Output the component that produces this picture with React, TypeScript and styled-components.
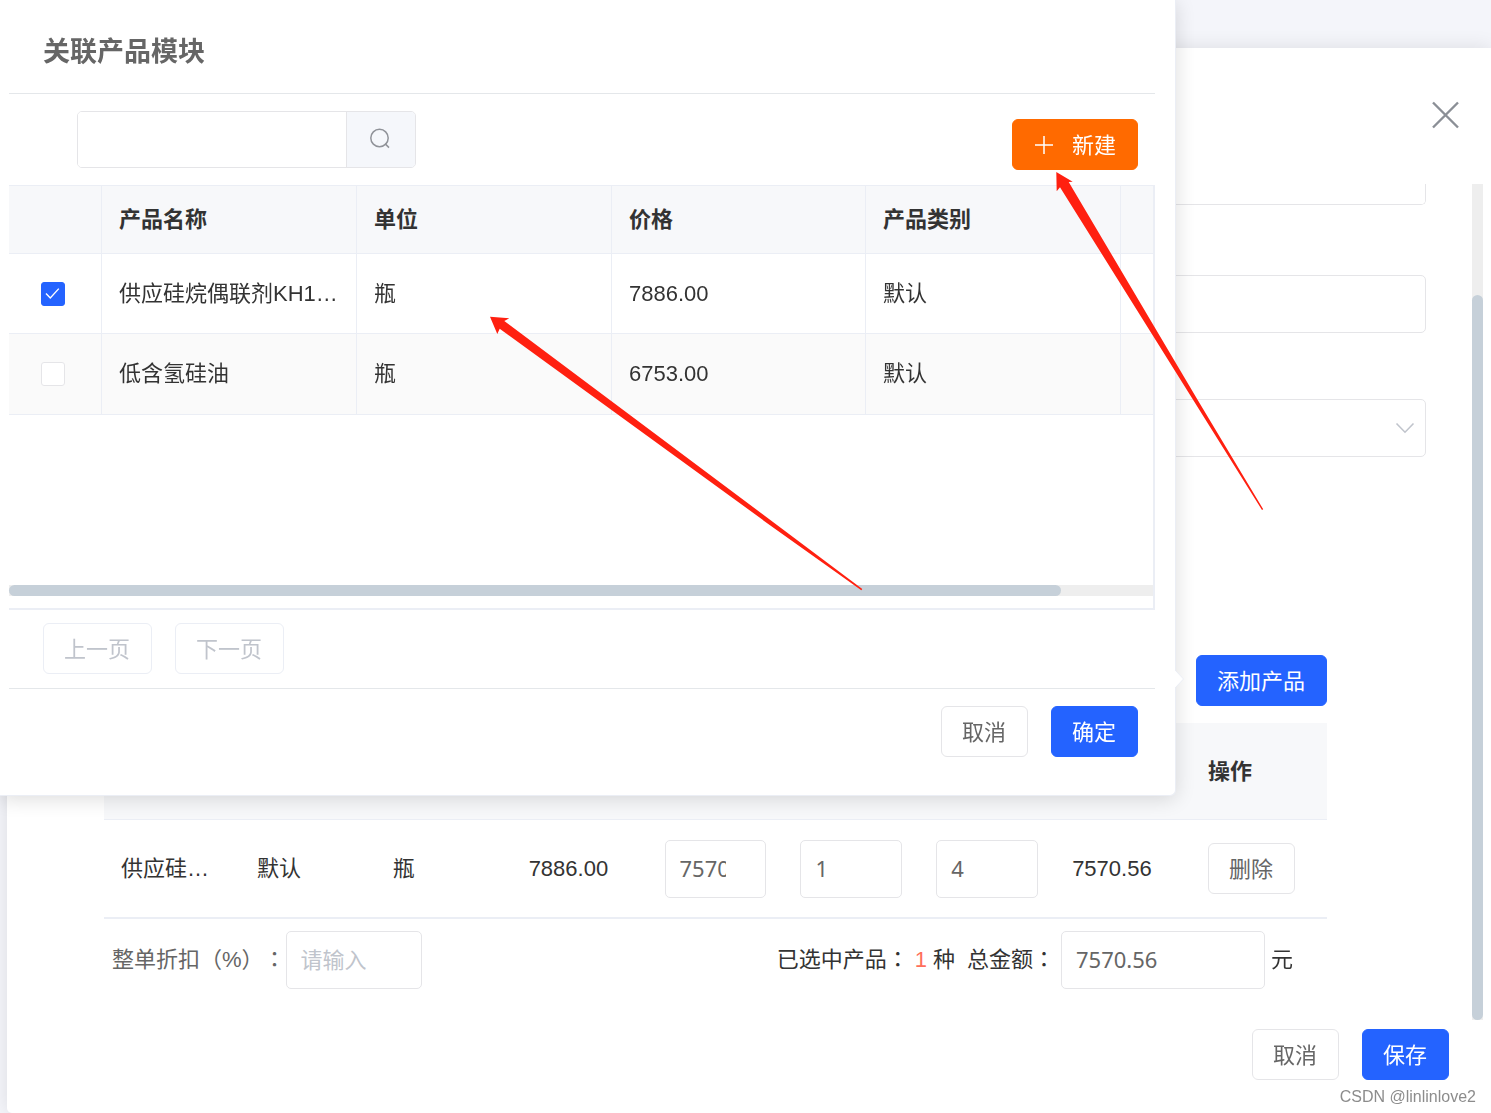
import React, { useState } from "react";
import styled, { createGlobalStyle, css } from "styled-components";

const color = {
  page: "#f4f5fa",
  text: "#333333",
  muted: "#666666",
  hint: "#c0c4cc",
  line: "#ebeef5",
  rule: "#e4e7ea",
  field: "#e5e5e8",
  head: "#f7f8fa",
  primary: "#2463ff",
  accent: "#ff6a00",
  thumb: "#c6d0d9",
  track: "#eeeeee",
};

const GlobalStyle = createGlobalStyle`
  *, *::before, *::after { box-sizing: border-box; }
  body {
    margin: 0;
    background: ${color.page};
    color: ${color.text};
    font: 22px/30px "Liberation Sans", "Noto Sans CJK SC", sans-serif;
    text-spacing-trim: space-all;
  }
  button, input, select, textarea { font: inherit; margin: 0; }
`;

const Page = styled.div`
  position: relative;
  display: flex;
  min-height: 100vh;
  padding: 48px 0 0 7px;
  overflow: hidden;
`;

/* ---------- shared controls ---------- */

const Button = styled.button<{ $kind?: "primary" | "accent" | "plain" }>`
  display: inline-flex;
  align-items: center;
  gap: 17px;
  height: 51px;
  padding: 2px 21px 0 20px;
  border: 1px solid ${color.field};
  border-radius: 6px;
  background: #fff;
  color: ${color.muted};
  white-space: nowrap;
  cursor: pointer;
  ${(p) =>
    p.$kind === "primary" &&
    css`
      border-color: ${color.primary};
      background: ${color.primary};
      color: #fff;
    `}
  ${(p) =>
    p.$kind === "accent" &&
    css`
      border-color: ${color.accent};
      background: ${color.accent};
      color: #fff;
    `}
  &:disabled {
    border-color: ${color.line};
    color: ${color.hint};
    cursor: not-allowed;
  }
`;

const fieldStyle = css`
  display: block;
  width: 100%;
  height: 58px;
  padding: 0 14px 2px;
  border: 1px solid ${color.field};
  border-radius: 5px;
  outline: none;
  background: #fff;
  color: ${color.muted};
  font-family: "Noto Sans", "Noto Sans CJK SC", sans-serif;
  &::placeholder {
    color: ${color.hint};
    opacity: 1;
  }
`;

const TextInput = styled.input`
  ${fieldStyle}
`;

const NumberInput = styled.input`
  ${fieldStyle}
  padding-right: 39px;
`;

const ButtonRow = styled.div`
  display: flex;
  gap: 23px;
`;

/* ---------- dialog ---------- */

const Dialog = styled.section`
  flex: 1;
  min-width: 0;
  display: flex;
  flex-direction: column;
  background: #fff;
  border-radius: 5px 0 0 5px;
  box-shadow: 0 0 20px rgba(0, 0, 0, 0.1);
`;

const DialogHeader = styled.header`
  display: flex;
  justify-content: flex-end;
  align-items: center;
  height: 136px;
  padding: 0 29px 2px 0;
`;

const CloseButton = styled.button`
  display: flex;
  padding: 0;
  border: 0;
  background: none;
  cursor: pointer;
`;

const DialogBody = styled.div`
  flex: 1;
  display: flex;
  padding-right: 8px;
`;

const Form = styled.form`
  flex: 1;
  min-width: 0;
  display: flex;
  flex-direction: column;
  padding: 0 46px 31px 97px;
`;

const ScrollTrack = styled.div`
  display: flex;
  width: 11px;
  padding-top: 111px;
  background: ${color.track};
`;

const ScrollThumb = styled.div`
  flex: 1;
  border-radius: 6px;
  background: ${color.thumb};
`;

const NoteInput = styled.textarea`
  ${fieldStyle}
  height: 21px;
  margin-bottom: 70px;
  border-top: 0;
  border-radius: 0 0 5px 5px;
  resize: none;
`;

const SelectBox = styled.div`
  display: grid;
  align-items: center;
  margin: 66px 0 198px;
  > * {
    grid-area: 1 / 1;
  }
  > svg {
    justify-self: end;
    margin-right: 11px;
    pointer-events: none;
  }
`;

const Select = styled.select`
  ${fieldStyle}
  appearance: none;
`;

const Products = styled.div`
  display: flex;
  flex-direction: column;
  align-items: flex-end;
  margin-right: 99px;
`;

const ProductTable = styled.table`
  width: 100%;
  margin: 17px 0 12px;
  table-layout: fixed;
  border-spacing: 0;
  border-bottom: 2px solid ${color.line};
  th,
  td {
    height: 97px;
    padding: 0 17px;
    text-align: left;
    white-space: nowrap;
  }
  th {
    padding-top: 2px;
    border-bottom: 1px solid ${color.line};
    background: ${color.head};
  }
`;

const Summary = styled.div`
  display: flex;
  justify-content: space-between;
  width: 100%;
  padding: 0 34px 0 8px;
`;

const SummaryGroup = styled.div<{ $gap: number }>`
  display: flex;
  align-items: center;
  gap: ${(p) => p.$gap}px;
  white-space: nowrap;
`;

const DiscountLabel = styled.label`
  color: ${color.muted};
`;

const AmountLabel = styled.label`
  padding-left: 6px;
`;

/* Full-width colon drawn in the middle of its cell */
const Colon = styled.span`
  font-family: "Noto Sans CJK TC", sans-serif;
  line-height: 1;
`;

const Count = styled.strong`
  color: #ff6f5b;
  font-weight: 400;
`;

const SummaryField = styled.div<{ $width: number }>`
  width: ${(p) => p.$width}px;
`;

const DialogFooter = styled.footer`
  display: flex;
  justify-content: flex-end;
  padding: 9px 42px 33px;
`;

/* ---------- popover ---------- */

const Popover = styled.section`
  position: absolute;
  top: 0;
  left: 0;
  right: 315px;
  padding: 0 20px 38px 9px;
  border: solid ${color.line};
  border-width: 0 1px 1px 0;
  border-radius: 0 0 6px 0;
  background: #fff;
  box-shadow: 0 3px 20px rgba(0, 0, 0, 0.14);
`;

const PopoverArrow = styled.svg`
  position: absolute;
  right: -9px;
  bottom: 106px;
`;

const PopoverTitle = styled.h2`
  margin: 0;
  padding: 34px 34px 23px;
  border-bottom: 1px solid ${color.rule};
  color: ${color.muted};
  font-size: 27px;
  line-height: 36px;
`;

const Toolbar = styled.div`
  display: flex;
  justify-content: space-between;
  align-items: flex-start;
  padding: 17px 17px 17px 68px;
`;

const SearchBox = styled.div`
  display: flex;
  width: 339px;
  height: 57px;
  border: 1px solid ${color.field};
  border-radius: 5px;
  overflow: hidden;
`;

const SearchInput = styled.input`
  flex: 1;
  min-width: 0;
  padding: 0 14px;
  border: 0;
  outline: none;
`;

const SearchButton = styled.button`
  display: flex;
  align-items: center;
  width: 69px;
  padding: 0 22px 2px;
  border: 0;
  border-left: 1px solid ${color.field};
  background: #f5f7fb;
  cursor: pointer;
`;

const ToolbarAction = styled.div`
  display: flex;
  height: 57px;
  padding-top: 8px;
`;

const PickerFrame = styled.div`
  display: flex;
  flex-direction: column;
  height: 425px;
  padding-bottom: 12px;
  border: solid ${color.line};
  border-width: 1px 2px 2px 0;
`;

const PickerView = styled.div`
  flex: 1;
  overflow: hidden;
`;

const PickerTable = styled.table`
  width: 100%;
  min-width: 1244px;
  table-layout: fixed;
  border-spacing: 0;
  th,
  td {
    height: 80px;
    padding: 0 17px;
    border: solid ${color.line};
    border-width: 0 1px 1px 0;
    text-align: left;
    white-space: nowrap;
  }
  th {
    height: 68px;
    background: ${color.head};
  }
  th:first-child,
  td:first-child {
    padding: 0 0 0 32px;
  }
  tbody tr:nth-child(even) td {
    height: 81px;
    background: #fafafa;
  }
`;

const Col = styled.col<{ $width?: number }>`
  width: ${(p) => (p.$width ? `${p.$width}px` : "auto")};
`;

const CheckLabel = styled.label`
  display: grid;
  width: 24px;
  height: 24px;
  > * {
    grid-area: 1 / 1;
  }
  > svg {
    pointer-events: none;
  }
`;

const CheckInput = styled.input`
  appearance: none;
  width: 24px;
  height: 24px;
  border: 1px solid ${color.field};
  border-radius: 3px;
  background: #fff;
  &:checked {
    border-color: ${color.primary};
    background: ${color.primary};
  }
`;

const HScrollTrack = styled.div`
  height: 11px;
  background: ${color.track};
`;

const HScrollThumb = styled.div`
  width: 92%;
  height: 100%;
  border-radius: 6px;
  background: ${color.thumb};
`;

const Pager = styled.div`
  display: flex;
  gap: 23px;
  padding: 13px 34px 14px;
  border-bottom: 1px solid ${color.rule};
`;

const PopoverFooter = styled.footer`
  display: flex;
  justify-content: flex-end;
  padding: 17px 17px 0;
`;

/* ---------- annotations ---------- */

const Annotations = styled.svg`
  position: absolute;
  top: 0;
  left: 0;
  pointer-events: none;
`;

const Watermark = styled.span`
  position: absolute;
  right: 15px;
  bottom: 5px;
  color: #8c8c8c;
  font-size: 16px;
  line-height: 22px;
  text-shadow: 1px 1px 0 #fff;
`;

const CloseIcon = () => (
  <svg width="34" height="34" viewBox="0 0 34 34" fill="none" stroke="#8b8f96" strokeWidth="2.4">
    <path d="M5 4.5 30 29.5M30 4.5 5 29.5" />
  </svg>
);

const SearchIcon = () => (
  <svg width="22" height="22" viewBox="0 0 22 22" fill="none" stroke="#909399" strokeWidth="1.5">
    <circle cx="10.5" cy="10" r="8.7" />
    <path d="M16 15.6 20 19.6" />
  </svg>
);

const PlusIcon = () => (
  <svg width="22" height="22" viewBox="0 0 22 22" fill="none" stroke="#fff" strokeWidth="1.5">
    <path d="M11 1v18M2 10h18" />
  </svg>
);

const CheckIcon = () => (
  <svg width="24" height="24" viewBox="0 0 24 24" fill="none" stroke="#fff" strokeWidth="1.4">
    <path d="M5 11.5 9.3 16 17.8 6.6" />
  </svg>
);

const ChevronIcon = () => (
  <svg width="20" height="20" viewBox="0 0 20 20" fill="none" stroke="#c0c4cc" strokeWidth="1.6">
    <path d="M1.5 5.5 10 14.2 18.5 5.5" />
  </svg>
);

const catalogue = [
  { name: "供应硅烷偶联剂KH1…", unit: "瓶", price: "7886.00", category: "默认" },
  { name: "低含氢硅油", unit: "瓶", price: "6753.00", category: "默认" },
];

function PickerPopover() {
  const [picked, setPicked] = useState([true, false]);
  const toggle = (index: number) =>
    setPicked((list) => list.map((on, i) => (i === index ? !on : on)));

  return (
    <Popover>
      <PopoverTitle>关联产品模块</PopoverTitle>
      <Toolbar>
        <SearchBox>
          <SearchInput type="text" aria-label="搜索产品" />
          <SearchButton type="button" aria-label="搜索">
            <SearchIcon />
          </SearchButton>
        </SearchBox>
        <ToolbarAction>
          <Button type="button" $kind="accent">
            <PlusIcon />
            新建
          </Button>
        </ToolbarAction>
      </Toolbar>
      <PickerFrame>
        <PickerView>
          <PickerTable>
            <colgroup>
              <Col $width={93} />
              <Col $width={255} />
              <Col $width={255} />
              <Col $width={254} />
              <Col $width={255} />
              <Col />
            </colgroup>
            <thead>
              <tr>
                <th />
                <th>产品名称</th>
                <th>单位</th>
                <th>价格</th>
                <th>产品类别</th>
                <th />
              </tr>
            </thead>
            <tbody>
              {catalogue.map((item, index) => (
                <tr key={item.name}>
                  <td>
                    <CheckLabel>
                      <CheckInput
                        type="checkbox"
                        aria-label={item.name}
                        checked={picked[index]}
                        onChange={() => toggle(index)}
                      />
                      {picked[index] && <CheckIcon />}
                    </CheckLabel>
                  </td>
                  <td>{item.name}</td>
                  <td>{item.unit}</td>
                  <td>{item.price}</td>
                  <td>{item.category}</td>
                  <td />
                </tr>
              ))}
            </tbody>
          </PickerTable>
        </PickerView>
        <HScrollTrack>
          <HScrollThumb />
        </HScrollTrack>
      </PickerFrame>
      <Pager>
        <Button type="button" disabled>上一页</Button>
        <Button type="button" disabled>下一页</Button>
      </Pager>
      <PopoverFooter>
        <ButtonRow>
          <Button type="button">取消</Button>
          <Button type="button" $kind="primary">确定</Button>
        </ButtonRow>
      </PopoverFooter>
      <PopoverArrow width="9" height="20" viewBox="0 0 9 20">
        <path d="M0 1 8.5 10 0 19Z" fill="#fff" />
        <path d="M0 1 8.5 10 0 19" fill="none" stroke={color.line} />
      </PopoverArrow>
    </Popover>
  );
}

export default function App() {
  return (
    <Page>
      <GlobalStyle />
      <Dialog>
        <DialogHeader>
          <CloseButton type="button" aria-label="关闭">
            <CloseIcon />
          </CloseButton>
        </DialogHeader>
        <DialogBody>
          <Form>
            <NoteInput aria-label="备注" />
            <TextInput type="text" aria-label="名称" />
            <SelectBox>
              <Select aria-label="类型" />
              <ChevronIcon />
            </SelectBox>
            <Products>
              <Button type="button" $kind="primary">添加产品</Button>
              <ProductTable>
                <thead>
                  <tr>
                    <th colSpan={8} />
                    <th>操作</th>
                  </tr>
                </thead>
                <tbody>
                  <tr>
                    <td>供应硅…</td>
                    <td>默认</td>
                    <td>瓶</td>
                    <td>7886.00</td>
                    <td><NumberInput aria-label="售价" defaultValue="7570.56" /></td>
                    <td><NumberInput aria-label="数量" defaultValue="1" /></td>
                    <td><NumberInput aria-label="折扣" defaultValue="4" /></td>
                    <td>7570.56</td>
                    <td><Button type="button">删除</Button></td>
                  </tr>
                </tbody>
              </ProductTable>
              <Summary>
                <SummaryGroup $gap={0}>
                  <DiscountLabel htmlFor="discount">
                    整单折扣（%）<Colon>：</Colon>
                  </DiscountLabel>
                  <SummaryField $width={136}>
                    <TextInput id="discount" placeholder="请输入" />
                  </SummaryField>
                </SummaryGroup>
                <SummaryGroup $gap={6}>
                  <span>已选中产品<Colon>：</Colon></span>
                  <Count>1</Count>
                  <span>种</span>
                  <AmountLabel htmlFor="amount">总金额<Colon>：</Colon></AmountLabel>
                  <SummaryField $width={204}>
                    <TextInput id="amount" defaultValue="7570.56" />
                  </SummaryField>
                  <span>元</span>
                </SummaryGroup>
              </Summary>
            </Products>
          </Form>
          <ScrollTrack>
            <ScrollThumb />
          </ScrollTrack>
        </DialogBody>
        <DialogFooter>
          <ButtonRow>
            <Button type="button">取消</Button>
            <Button type="button" $kind="primary">保存</Button>
          </ButtonRow>
        </DialogFooter>
      </Dialog>
      <PickerPopover />
      <Annotations width="1280" height="620" viewBox="0 0 1280 620" fill="#ff2010">
        <path d="M490 316.7 509.3 318.3 504.3 321 770 519.8 862.3 589 861.3 590.2 770 525.2 499.7 328.7 497.3 334Z" />
        <path d="M1056.3 172 1072.7 181.7 1068.7 182 1197.7 400 1263.2 509.2 1262 510 1193.2 400 1060 187.3 1056.7 191.3Z" />
      </Annotations>
      <Watermark>CSDN @linlinlove2</Watermark>
    </Page>
  );
}
